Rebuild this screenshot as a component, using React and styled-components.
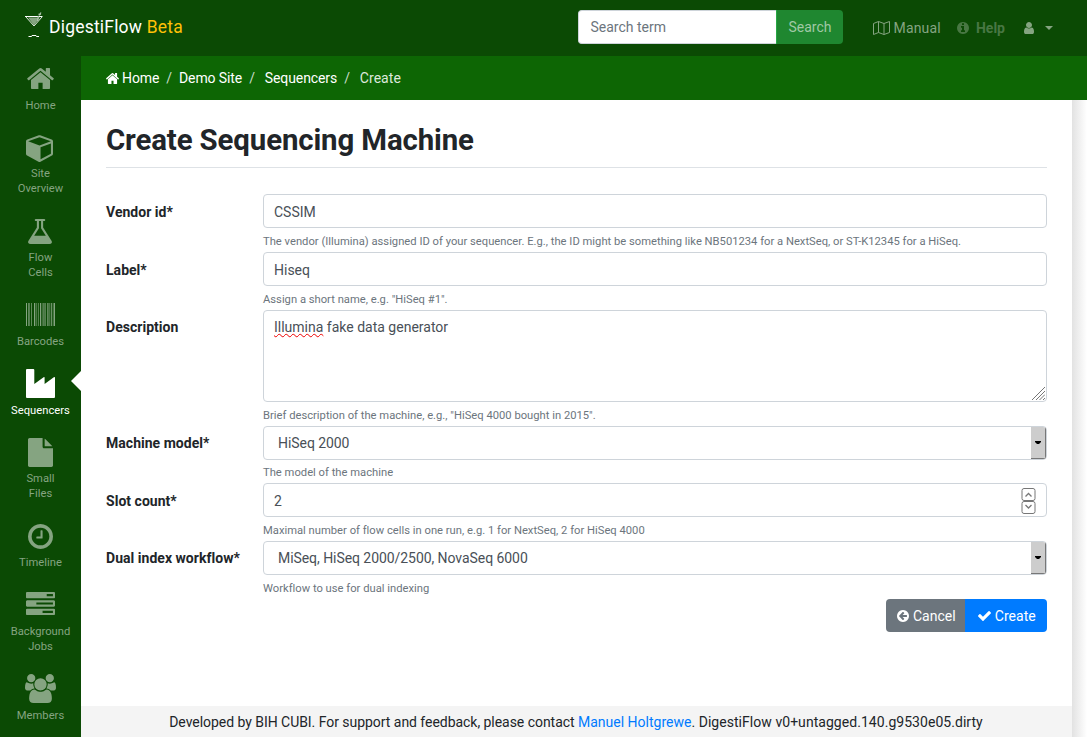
import React from 'react';
import styled, { createGlobalStyle } from 'styled-components';

const Global = createGlobalStyle`
  *, *::before, *::after { box-sizing: border-box; }
  html { font-size: 14px; }
  body {
    margin: 0;
    font: 400 14px/21px Roboto, "Liberation Sans", sans-serif;
    color: #212529;
    background: #fff;
    overflow: hidden;
  }
  input, textarea, button { font: inherit; }
  a { text-decoration: none; color: inherit; }
`;

const Page = styled.div`
  display: flex;
  flex-direction: column;
  width: 100%;
  height: 100vh;
`;
const TopBar = styled.header`
  flex: 0 0 56px;
  display: flex;
  align-items: center;
  justify-content: space-between;
  background: #0b4a04;
  padding: 0 34px 2px 25px;
`;
const Brand = styled.a`
  display: flex;
  align-items: center;
  gap: 6px;
  font-size: 17.5px;
  line-height: 26px;
  letter-spacing: 0.2px;
  color: #fff;
  white-space: pre;
  svg { margin-top: -4px; }
`;
const Beta = styled.span`color: #ffc107;`;
const TopRight = styled.div`
  display: flex;
  align-items: center;
`;
const SearchGroup = styled.form`
  display: flex;
  width: 265px;
  height: 34px;
  margin-right: 30px;
`;
const SearchInput = styled.input`
  width: 198px;
  padding: 0 11px;
  border: 1px solid #ced4da;
  border-right: 0;
  border-radius: 4px 0 0 4px;
  background: #fff;
  &::placeholder { color: #6c757d; opacity: 1; }
`;
const SearchButton = styled.button`
  flex: 1;
  padding: 0 1px 0 0;
  border: 0;
  border-left: 1px solid #28a745;
  border-radius: 0 4px 4px 0;
  background: #1f8730;
  color: #a0c9a5;
`;
const TopLink = styled.a`
  display: flex;
  align-items: center;
  gap: ${(p) => p.$gap || 4}px;
  margin-left: ${(p) => p.$ml || 0}px;
  padding-top: 2px;
  color: ${(p) => (p.$dim ? '#487743' : '#85a481')};
  font-weight: ${(p) => (p.$dim ? 700 : 400)};
  letter-spacing: ${(p) => (p.$dim ? 0 : 0.2)}px;
`;
const Caret = styled.span`
  border: 4px solid transparent;
  border-top-color: currentColor;
  border-bottom: 0;
`;

const Body = styled.div`
  flex: 1;
  min-height: 0;
  display: flex;
`;
const Sidebar = styled.nav`
  flex: 0 0 81px;
  padding-top: 2px;
  background: #0b4a04;
  overflow: hidden;
`;
const SideItem = styled.a`
  position: relative;
  display: block;
  height: ${(p) => p.$h}px;
  text-align: center;
  font-size: 11.2px;
  line-height: 15px;
  color: ${(p) => (p.$active ? '#fff' : '#85a481')};
`;
const SideIcon = styled.span`
  display: flex;
  justify-content: center;
  height: 40px;
  padding: ${(p) => p.$top}px ${(p) => p.$nudge || 0}px 0 0;
`;
const Pointer = styled.span`
  position: absolute;
  right: 0;
  top: 8px;
  border: 10px solid transparent;
  border-right-color: #fff;
  border-left: 0;
`;
const SideLabel = styled.span`
  display: block;
  white-space: pre-line;
  letter-spacing: 0.02px;
`;
const Main = styled.div`
  flex: 1;
  min-width: 0;
  display: flex;
  flex-direction: column;
`;
const Crumbs = styled.div`
  flex: 0 0 44px;
  display: flex;
  align-items: center;
  padding-left: 25px;
  background: #0d6604;
  color: #fff;
  letter-spacing: -0.1px;
  svg { margin-right: 3px; }
`;
const Slash = styled.span`
  color: #c9dcc7;
  margin: 0 ${(p) => p.$after}px 0 7px;
`;
const Current = styled.span`
  color: #dde9dc;
  letter-spacing: 0.05px;
`;
const Stage = styled.div`
  flex: 1;
  min-height: 0;
  display: flex;
  background: linear-gradient(to right, #e2e2e2, #fff) right / 15px 100% no-repeat;
`;
const Sheet = styled.main`
  flex: 0 0 991px;
  display: flex;
  flex-direction: column;
  background: #fff;
`;
const Content = styled.div`
  flex: 1;
  padding: 21px 25px 0;
`;
const Title = styled.h1`
  margin: 0 0 26.47px;
  height: 47px;
  border-bottom: 1px solid #dee2e6;
  font-size: 29.4px;
  line-height: 38px;
  font-weight: 700;
  letter-spacing: -0.12px;
`;
const Row = styled.div`
  display: flex;
  height: ${(p) => p.$h || 57.72}px;
`;
const Label = styled.label`
  flex: 0 0 157px;
  padding-top: 7.42px;
  font-weight: 700;
  letter-spacing: 0.03px;
`;
const Field = styled.div`flex: 1;`;
const Box = styled.div`
  display: flex;
  justify-content: space-between;
  height: ${(p) => p.$h || 34}px;
  padding: 6.42px 0 0 ${(p) => (p.$select ? 14 : 10)}px;
  border: 1px solid #ced4da;
  border-radius: 4px;
  color: #495057;
  letter-spacing: ${(p) => (p.$select ? -0.06 : 0)}px;
  overflow: hidden;
`;
const Help = styled.small`
  display: block;
  margin-top: 4.7px;
  font-size: 11.2px;
  line-height: 17px;
  letter-spacing: 0.012px;
  color: #6c757d;
`;
const SelectArrow = styled.span`
  display: flex;
  align-items: center;
  justify-content: center;
  width: 15px;
  height: 32px;
  margin-top: -6.42px;
  background: #cdcdcd;
  border-right: 1px solid #777;
  border-bottom: 1px solid #777;
  color: #000;
`;
const Misspelt = styled.span`
  text-decoration: underline wavy #e00 1px;
  text-underline-offset: 1px;
  text-decoration-skip-ink: none;
`;
const Grip = styled.svg`
  align-self: flex-end;
  margin: 0 1px 1px 0;
`;
const Stepper = styled.svg`margin: -3.2px 10px 0 0;`;
const Buttons = styled.div`
  display: flex;
  justify-content: flex-end;
`;
const Button = styled.button`
  display: flex;
  align-items: center;
  justify-content: center;
  gap: 3.5px;
  width: ${(p) => p.$w}px;
  height: 33px;
  padding: 2px 0 0 2px;
  border: 0;
  border-radius: ${(p) => (p.$primary ? '0 4px 4px 0' : '4px 0 0 4px')};
  background: ${(p) => (p.$primary ? '#007bff' : '#6c757d')};
  color: #fff;
`;
const Footer = styled.footer`
  flex: 0 0 31px;
  padding: 6px 1px 0 0;
  text-align: center;
  background: #f4f4f4;
  letter-spacing: -0.04px;
  a { color: #007bff; letter-spacing: 0; }
`;
const Version = styled.span`letter-spacing: 0.045px;`;

const DISC = 'm256-64q0 209-103 385.5t-279.5 279.5-385.5 103-385.5-103-279.5-279.5-103-385.5 103-385.5 279.5-279.5 385.5-103 385.5 103 279.5 279.5 103 385.5z';
const SHAPES = {
  home: ['80 253 1632 1283', 'M1472 992v480q0 26-19 45t-45 19h-384v-384h-256v384h-384q-26 0-45-19t-19-45v-480q0-1 .5-3t.5-3l575-474 575 474q1 2 1 6zm223-69l-62 74q-8 9-21 11h-3q-13 0-21-7l-692-577-692 577q-12 8-24 7-13-2-21-11l-62-74q-8-10-7-23.5t11-21.5l719-599q32-26 76-26t76 26l244 204v-195q0-14 9-23t23-9h192q14 0 23 9t9 23v408l219 182q10 8 11 21.5t-7 23.5z'],
  cube: ['0 118 1664 1674', 'M896 1629l640-349v-636l-640 233v752zm-64-865l698-254-698-254-698 254zm832-252v768q0 35-18 65t-49 47l-704 384q-28 16-61 16t-61-16l-704-384q-31-17-49-47t-18-65v-768q0-40 23-73t61-47l704-256q22-8 44-8t44 8l704 256q38 14 61 47t23 73z'],
  flask: ['160 128 1472 1536', 'M1591 1448q56 89 21.5 152.5t-140.5 63.5h-1152q-106 0-140.5-63.5t21.5-152.5l503-793v-399h-64q-26 0-45-19t-19-45 19-45 45-19h512q26 0 45 19t19 45-19 45-45 19h-64v399zm-779-725l-272 429h712l-272-429-20-31v-436h-128v436z'],
  barcode: ['0 0 29 23', 'M0 0h1v23h-1zM2 0h.7v23h-.7zM3.4 0h.6v23h-.6zM5.2 0h.7v23h-.7zM8 0h1.3v23h-1.3zM10.5 0h.6v23h-.6zM12 0h.6v23h-.6zM14 0h1.2v23h-1.2zM16.6 0h1v23h-1zM18.5 0h1.1v23h-1.1zM21.3 0h1.2v23h-1.2zM23.5 0h.7v23h-.7zM25.2 0h1v23h-1zM27 0h.5v23h-.5zM28 0h1v23h-1z'],
  industry: ['0 0 29 29', 'M1 0h6.300q1 0 1 1v14l9.300-6.800q1-.6 1 .5v6.300l9.200-6.800q1.200-.6 1.200.5v19.300q0 1-1 1h-27q-1 0-1-1v-27q0-1 1-1z'],
  file: ['128 0 1536 1792', 'M1152 512v-472q22 14 36 28l408 408q14 14 28 36h-472zm-128 32q0 40 28 68t68 28h544v1056q0 40-28 68t-68 28h-1344q-40 0-68-28t-28-68v-1600q0-40 28-68t68-28h800v544z'],
  clock: ['128 128 1536 1536', 'M1024 544v448q0 14-9 23t-23 9h-320q-14 0-23-9t-9-23v-64q0-14 9-23t23-9h224v-352q0-14 9-23t23-9h64q14 0 23 9t9 23zm416 352q0-148-73-273t-198-198-273-73-273 73-198 198-73 273 73 273 198 198 273 73 273-73 198-198 73-273zm224 0q0 209-103 385.5t-279.5 279.5-385.5 103-385.500-103-279.500-279.500-103-385.500 103-385.500 279.500-279.500 385.500-103 385.500 103 279.500 279.500 103 385.500z'],
  tasks: ['0 128 1792 1408', 'M1024 1408h640v-128h-640v128zm-384-512h1024v-128h-1024v128zm640-512h384v-128h-384v128zm512 832v256q0 26-19 45t-45 19h-1664q-26 0-45-19t-19-45v-256q0-26 19-45t45-19h1664q26 0 45 19t19 45zm0-512v256q0 26-19 45t-45 19h-1664q-26 0-45-19t-19-45v-256q0-26 19-45t45-19h1664q26 0 45 19t19 45zm0-512v256q0 26-19 45t-45 19h-1664q-26 0-45-19t-19-45v-256q0-26 19-45t45-19h1664q26 0 45 19t19 45z'],
  users: ['0 0 1920 1792', 'M593 896q-162 5-265 128h-134q-82 0-138-40.5t-56-118.5q0-353 124-353 6 0 43.5 21t97.5 42.5 119 21.5q67 0 133-23-5 37-5 66 0 139 81 256zm1071 637q0 120-73 189.5t-194 69.5h-874q-121 0-194-69.5t-73-189.5q0-53 3.5-103.5t14-109 26.5-108.5 43-97.5 62-81 85.5-53.5 111.5-20q10 0 43 21.5t73 48 107 48 135 21.5 135-21.5 107-48 73-48 43-21.5q61 0 111.5 20t85.5 53.5 62 81 43 97.5 26.5 108.5 14 109 3.5 103.5zm-1024-1277q0 106-75 181t-181 75-181-75-75-181 75-181 181-75 181 75 75 181zm704 384q0 159-112.5 271.5t-271.5 112.5-271.5-112.5-112.5-271.5 112.5-271.5 271.5-112.5 271.5 112.5 112.5 271.5zm576 225q0 78-56 118.5t-138 40.5h-134q-103-123-265-128 81-117 81-256 0-29-5-66 66 23 133 23 59 0 119-21.5t97.5-42.5 43.5-21q124 0 124 353zm-128-609q0 106-75 181t-181 75-181-75-75-181 75-181 181-75 181 75 75 181z'],
  user: ['256 128 1280 1536', 'M1536 1399q0 109-62.5 187t-150.5 78h-854q-88 0-150.5-78t-62.5-187q0-85 8.5-160.5t31.5-152 58.5-131 94-89 134.5-34.5q131 128 313 128t313-128q76 0 134.5 34.5t94 89 58.5 131 31.5 152 8.5 160.5zm-256-887q0 159-112.5 271.5t-271.5 112.5-271.5-112.5-112.5-271.5 112.5-271.5 271.5-112.5 271.5 112.5 112.5 271.5z'],
  info: ['128 128 1536 1536', 'M1152 1376v-160q0-14-9-23t-23-9h-96v-512q0-14-9-23t-23-9h-320q-14 0-23 9t-9 23v160q0 14 9 23t23 9h96v320h-96q-14 0-23 9t-9 23v160q0 14 9 23t23 9h448q14 0 23-9t9-23zm-128-896v-160q0-14-9-23t-23-9h-192q-14 0-23 9t-9 23v160q0 14 9 23t23 9h192q14 0 23-9t9-23zm640 416q0 209-103 385.5t-279.5 279.5-385.5 103-385.5-103-279.5-279.5-103-385.5 103-385.5 279.5-279.5 385.5-103 385.5 103 279.5 279.5 103 385.5z'],
  check: ['121 334 1550 1188', 'M1671 566q0 40-28 68l-724 724-136 136q-28 28-68 28t-68-28l-136-136-362-362q-28-28-28-68t28-68l136-136q28-28 68-28t68 28l294 295 656-657q28-28 68-28t68 28l136 136q28 28 28 68z'],
  back: ['128 128 1536 1536', 'M1408 960v-128q0-26-19-45t-45-19h-502l189-189q19-19 19-45t-19-45l-91-91q-18-18-45-18t-45 18l-362 362-91 91q-18 18-18 45t18 45l91 91 362 362q18 18 45 18t45-18l91-91q18-18 18-45t-18-45l-189-189h502q26 0 45-19t19-45z' + DISC],
};
function Icon({ name, w, h }) {
  const [viewBox, d] = SHAPES[name];
  return (
    <svg width={w} height={h} viewBox={viewBox} preserveAspectRatio="none" fill="currentColor">
      <path d={d} />
    </svg>
  );
}
function MapIcon() {
  return (
    <svg width="17" height="14" viewBox="0 0 17 14" fill="none" stroke="currentColor" strokeLinejoin="round">
      <path d="M.5 2.500 5.500.5l5.500 2 5.500-2v11l-5.500 2-5.500-2-5 2zM5.500.5v11M11 2.500v11" />
    </svg>
  );
}
function Logo() {
  return (
    <svg width="18" height="26" viewBox="0 0 18 26">
      <path d="M3 5.500h12L9 13.500z" fill="#85a481" />
      <path d="M0 4.500h17.500" stroke="#fff" />
      <path d="M1 5l8 9 8-9" fill="none" stroke="#dfe8de" />
      <path d="M3.500 24.500h3l.5-1h4l.5 1h2.500" fill="none" stroke="#fff" />
      <path d="M12.500 9l1-5M14 3.500l2-3M13.500 2.500l2.500-.5" stroke="#a9bfa7" strokeWidth="1.300" />
    </svg>
  );
}
function Arrow() {
  return (
    <SelectArrow>
      <svg width="6" height="3" viewBox="0 0 6 3"><path d="M0 0h6v1L4 3H2L0 1z" /></svg>
    </SelectArrow>
  );
}

const NAV = [
  { icon: 'home', w: 27, h: 21, top: 10, label: 'Home', rowH: 68 },
  { icon: 'cube', w: 27, h: 27, top: 9, nudge: 2, label: 'Site\nOverview', rowH: 84 },
  { icon: 'flask', w: 24, h: 25, top: 9, nudge: 1, label: 'Flow\nCells', rowH: 84 },
  { icon: 'barcode', w: 29, h: 23, top: 9, label: 'Barcodes', rowH: 69 },
  { icon: 'industry', w: 29, h: 29, top: 6, label: 'Sequencers', rowH: 68, active: true },
  { icon: 'file', w: 25, h: 29, top: 7, label: 'Small\nFiles', rowH: 84 },
  { icon: 'clock', w: 25, h: 25, top: 9, label: 'Timeline', rowH: 69 },
  { icon: 'tasks', w: 29, h: 23, top: 8, label: 'Background\nJobs', rowH: 84 },
  { icon: 'users', w: 31, h: 29, top: 6, label: 'Members', rowH: 69 },
];

export default function App() {
  return (
    <Page>
      <Global />
      <TopBar>
        <Brand href="#"><Logo /><span>DigestiFlow <Beta>Beta</Beta></span></Brand>
        <TopRight>
          <SearchGroup>
            <SearchInput placeholder="Search term" />
            <SearchButton type="button">Search</SearchButton>
          </SearchGroup>
          <TopLink href="#" $gap={3}><MapIcon />Manual</TopLink>
          <TopLink href="#" $dim $ml={16} $gap={7}><Icon name="info" w={12} h={12} />Help</TopLink>
          <TopLink href="#" $ml={19} $gap={11}><Icon name="user" w={10} h={12} /><Caret /></TopLink>
        </TopRight>
      </TopBar>
      <Body>
        <Sidebar>
          {NAV.map((n) => (
            <SideItem key={n.icon} href="#" $h={n.rowH} $active={n.active}>
              <SideIcon $top={n.top} $nudge={n.nudge}><Icon name={n.icon} w={n.w} h={n.h} /></SideIcon>
              <SideLabel>{n.label}</SideLabel>
              {n.active && <Pointer />}
            </SideItem>
          ))}
        </Sidebar>
        <Main>
          <Crumbs>
            <Icon name="home" w={13} h={11} /><a href="#">Home</a><Slash $after={7}>/</Slash>
            <a href="#">Demo Site</a><Slash $after={10}>/</Slash>
            <a href="#">Sequencers</a><Slash $after={10}>/</Slash>
            <Current>Create</Current>
          </Crumbs>
          <Stage>
            <Sheet>
              <Content>
                <Title>Create Sequencing Machine</Title>
                <Row>
                  <Label>Vendor id*</Label>
                  <Field>
                    <Box>CSSIM</Box>
                    <Help>The vendor (Illumina) assigned ID of your sequencer. E.g., the ID might be something like NB501234 for a NextSeq, or ST-K12345 for a HiSeq.</Help>
                  </Field>
                </Row>
                <Row>
                  <Label>Label*</Label>
                  <Field><Box>Hiseq</Box><Help>Assign a short name, e.g. "HiSeq #1".</Help></Field>
                </Row>
                <Row $h={115.7}>
                  <Label>Description</Label>
                  <Field>
                    <Box $h={92.3}>
                      <span><Misspelt>Illumina</Misspelt> fake data generator</span>
                      <Grip width="13" height="13" viewBox="0 0 13 13" stroke="#777">
                        <path d="M0 13 13 0M4 13l9-9M7.500 13 13 7.500M11 13l2-2" />
                      </Grip>
                    </Box>
                    <Help>Brief description of the machine, e.g., "HiSeq 4000 bought in 2015".</Help>
                  </Field>
                </Row>
                <Row>
                  <Label>Machine model*</Label>
                  <Field><Box $select>HiSeq 2000<Arrow /></Box><Help>The model of the machine</Help></Field>
                </Row>
                <Row>
                  <Label>Slot count*</Label>
                  <Field>
                    <Box>2
                      <Stepper width="15" height="27" viewBox="0 0 15 27" fill="none" stroke="#777">
                        <rect x="1" y=".5" width="13" height="12" rx="2" />
                        <rect x="1" y="13.500" width="13" height="12" rx="2" />
                        <path d="m4.500 8.500 3-3 3 3M4.500 17l3 3 3-3" strokeWidth="1.300" />
                      </Stepper>
                    </Box>
                    <Help>Maximal number of flow cells in one run, e.g. 1 for NextSeq, 2 for HiSeq 4000</Help>
                  </Field>
                </Row>
                <Row>
                  <Label>Dual index workflow*</Label>
                  <Field><Box $select>MiSeq, HiSeq 2000/2500, NovaSeq 6000<Arrow /></Box><Help>Workflow to use for dual indexing</Help></Field>
                </Row>
                <Buttons>
                  <Button type="button" $w={79}><Icon name="back" w={12} h={12} />Cancel</Button>
                  <Button type="button" $primary $w={82}><Icon name="check" w={13} h={10} />Create</Button>
                </Buttons>
              </Content>
              <Footer>
                Developed by BIH CUBI. For support and feedback, please contact <a href="#">Manuel Holtgrewe</a><Version>. DigestiFlow v0+untagged.140.g9530e05.dirty</Version>
              </Footer>
            </Sheet>
          </Stage>
        </Main>
      </Body>
    </Page>
  );
}
